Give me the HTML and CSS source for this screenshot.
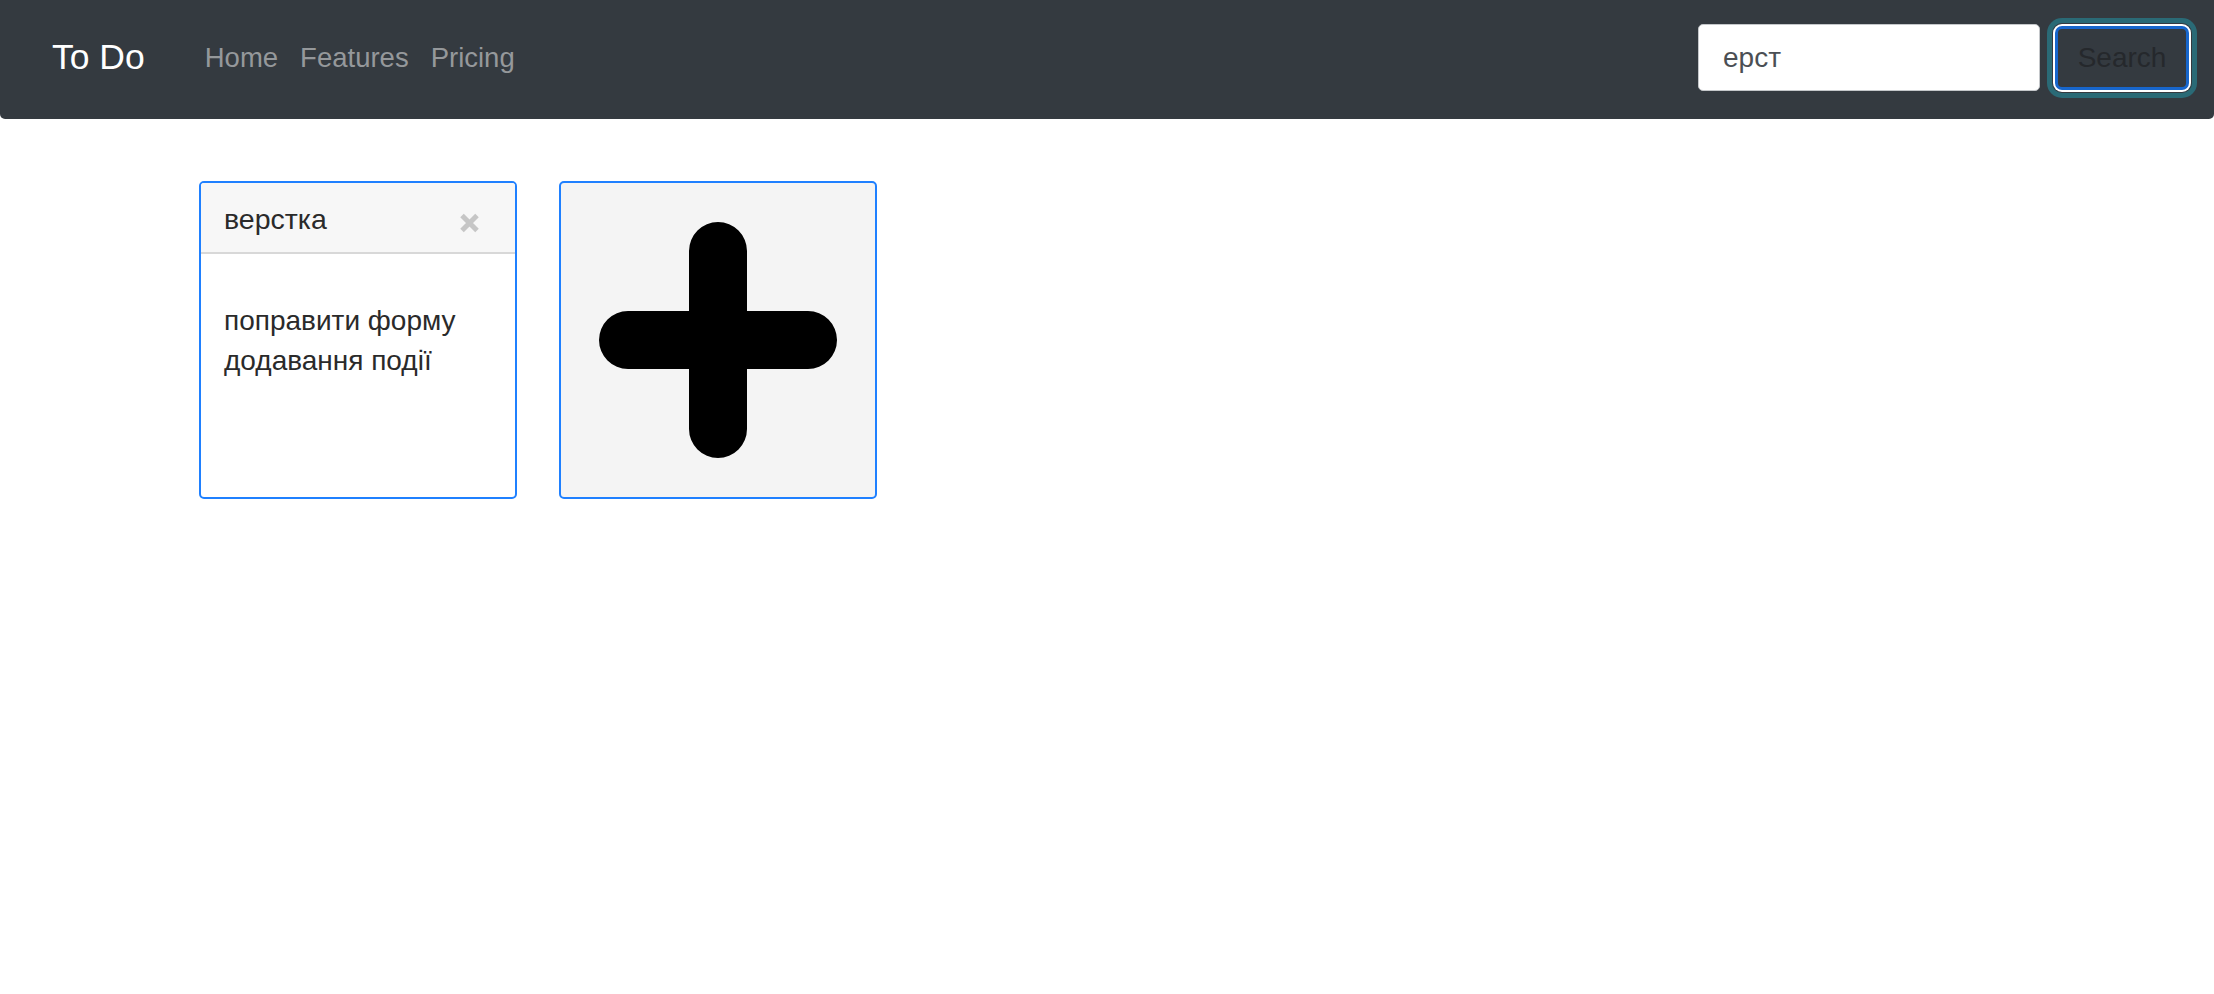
FILE: index.html
```html
<!DOCTYPE html>
<html lang="uk">
<head>
<meta charset="utf-8">
<title>To Do</title>
<link rel="stylesheet" href="styles.css">
</head>
<body>
<nav class="navbar">
  <a class="brand" href="#">To Do</a>
  <ul class="nav-links">
    <li><a href="#">Home</a></li>
    <li><a href="#">Features</a></li>
    <li><a href="#">Pricing</a></li>
  </ul>
  <form class="search">
    <input class="search-input" type="text" value="ерст">
    <button class="search-btn" type="button">Search</button>
  </form>
</nav>
<main class="board">
  <div class="card">
    <div class="card-header">
      <span class="card-title">верстка</span>
      <button class="close" type="button" aria-label="Close">
        <svg width="21" height="20" viewBox="0 0 21 20"><path d="M3 2.5 L18 17.5 M18 2.5 L3 17.5" stroke="#c6c6c6" stroke-width="5" fill="none"/></svg>
      </button>
    </div>
    <div class="card-body">поправити форму додавання події</div>
  </div>
  <div class="card card-add">
    <svg width="238" height="236" viewBox="0 0 238 236"><path d="M29 118 H209 M119 29 V207" stroke="#000" stroke-width="58" stroke-linecap="round" fill="none"/></svg>
  </div>
</main>
</body>
</html>
```
FILE: styles.css
```css
* { box-sizing: border-box; }
body {
  margin: 0;
  font-family: "Liberation Sans", Arial, sans-serif;
  color: #212529;
  background: #fff;
}
.navbar {
  height: 119px;
  background: #343a40;
  border-radius: 0 0 5px 5px;
  display: flex;
  align-items: center;
  padding: 0 25px 4px 52px;
}
.brand {
  font-size: 35.5px;
  color: #fff;
  text-decoration: none;
  margin-right: 49px;
}
.nav-links {
  list-style: none;
  margin: 0;
  padding: 0;
  display: flex;
}
.nav-links a {
  display: block;
  font-size: 27.5px;
  color: #95989b;
  text-decoration: none;
  padding: 0 11px;
}
.search {
  margin-left: auto;
  display: flex;
  align-items: center;
}
.search-input {
  width: 342px;
  height: 67px;
  border: 1px solid #c4c7ca;
  border-radius: 5px;
  background: #fff;
  font-family: inherit;
  font-size: 28px;
  color: #4b4f54;
  padding: 0 24px;
  margin: 0 15px 0 0;
  outline: none;
}
.search-btn {
  width: 134px;
  height: 64px;
  border: 3px solid #1766cc;
  border-radius: 7px;
  background: #343a40;
  color: #25282c;
  font-family: inherit;
  font-size: 28px;
  padding: 0;
  box-shadow: 0 0 0 2px #fff, 0 0 0 3px #343a40, 0 0 0 8px #2a6a76;
}
.board {
  display: flex;
  gap: 42px;
  padding: 62px 0 0 199px;
}
.card {
  width: 318px;
  height: 318px;
  border: 2px solid #1f80ff;
  border-radius: 5px;
  background: #fff;
  overflow: hidden;
  display: flex;
  flex-direction: column;
}
.card-header {
  height: 71px;
  background: #f7f7f7;
  border-bottom: 2px solid #d8d8d8;
  display: flex;
  align-items: flex-start;
  justify-content: space-between;
  padding: 16px 35px 0 23px;
}
.card-title {
  font-size: 28.5px;
  line-height: 40px;
  color: #2a2a2a;
}
.close {
  border: 0;
  background: none;
  padding: 0;
  margin-top: 14px;
  display: flex;
}
.card-body {
  padding: 47px 23px 0 23px;
  font-size: 28px;
  line-height: 40px;
  color: #2a2a2a;
}
.card-add {
  background: #f4f4f4;
  align-items: center;
  justify-content: center;
}
```
